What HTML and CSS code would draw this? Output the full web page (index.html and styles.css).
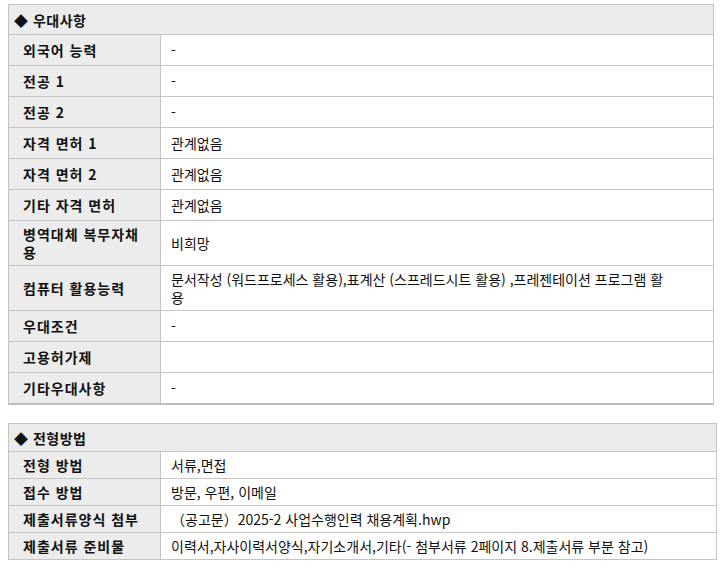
FILE: index.html
```html
<!DOCTYPE html>
<html lang="ko">
<head>
<meta charset="utf-8">
<title>우대사항 / 전형방법</title>
<link rel="stylesheet" href="styles.css">
</head>
<body>
<section class="box box-pref">
  <div class="head">◆ 우대사항</div>
  <div class="row"><div class="label">외국어 능력</div><div class="val">-</div></div>
  <div class="row"><div class="label">전공 1</div><div class="val">-</div></div>
  <div class="row"><div class="label">전공 2</div><div class="val">-</div></div>
  <div class="row"><div class="label">자격 면허 1</div><div class="val">관계없음</div></div>
  <div class="row"><div class="label">자격 면허 2</div><div class="val">관계없음</div></div>
  <div class="row"><div class="label">기타 자격 면허</div><div class="val">관계없음</div></div>
  <div class="row"><div class="label">병역대체 복무자채용</div><div class="val">비희망</div></div>
  <div class="row"><div class="label">컴퓨터 활용능력</div><div class="val val-wide">문서작성 (워드프로세스 활용),표계산 (스프레드시트 활용) ,프레젠테이션 프로그램 활용</div></div>
  <div class="row"><div class="label">우대조건</div><div class="val">-</div></div>
  <div class="row"><div class="label">고용허가제</div><div class="val"></div></div>
  <div class="row"><div class="label">기타우대사항</div><div class="val">-</div></div>
</section>

<section class="box box-sel">
  <div class="head">◆ 전형방법</div>
  <div class="row"><div class="label">전형 방법</div><div class="val">서류,면접</div></div>
  <div class="row"><div class="label">접수 방법</div><div class="val">방문, 우편, 이메일</div></div>
  <div class="row"><div class="label">제출서류양식 첨부</div><div class="val">（공고문）2025-2 사업수행인력 채용계획.hwp</div></div>
  <div class="row"><div class="label">제출서류 준비물</div><div class="val">이력서,자사이력서양식,자기소개서,기타(- 첨부서류 2페이지 8.제출서류 부분 참고)</div></div>
</section>
</body>
</html>
```
FILE: styles.css
```css
html, body {
  margin: 0;
  padding: 0;
  background: #ffffff;
}
body {
  padding: 4px 0 0 8px;
  font-family: "Noto Sans CJK KR", "Noto Sans", sans-serif;
  font-size: 14px;
  line-height: 18px;
  color: #111111;
}
.box {
  box-sizing: border-box;
  border: 1px solid #c4c4c4;
}
.box-pref {
  width: 706px;
  border-bottom: 2px solid #bdbdbd;
}
.box-sel {
  width: 709px;
  margin-top: 18px;
}
.head {
  background: #ebebeb;
  font-weight: bold;
  letter-spacing: 0.5px;
  padding: 0 5px;
  display: flex;
  align-items: center;
}
.box-pref .head { height: 29px; }
.box-sel .head { height: 27px; }
.row {
  display: grid;
  grid-template-columns: 152px 1fr;
  border-top: 1px solid #c4c4c4;
}
.box-pref .row { min-height: 30px; }
.box-sel .row { min-height: 26px; }
.label {
  background: #ececec;
  border-right: 1px solid #c4c4c4;
  font-weight: bold;
  letter-spacing: 1px;
  padding: 4px 10px 4px 14px;
  display: flex;
  align-items: center;
}
.val {
  padding: 4px 10px;
  display: flex;
  align-items: center;
}
.val-wide {
  padding-right: 40px;
}
```
